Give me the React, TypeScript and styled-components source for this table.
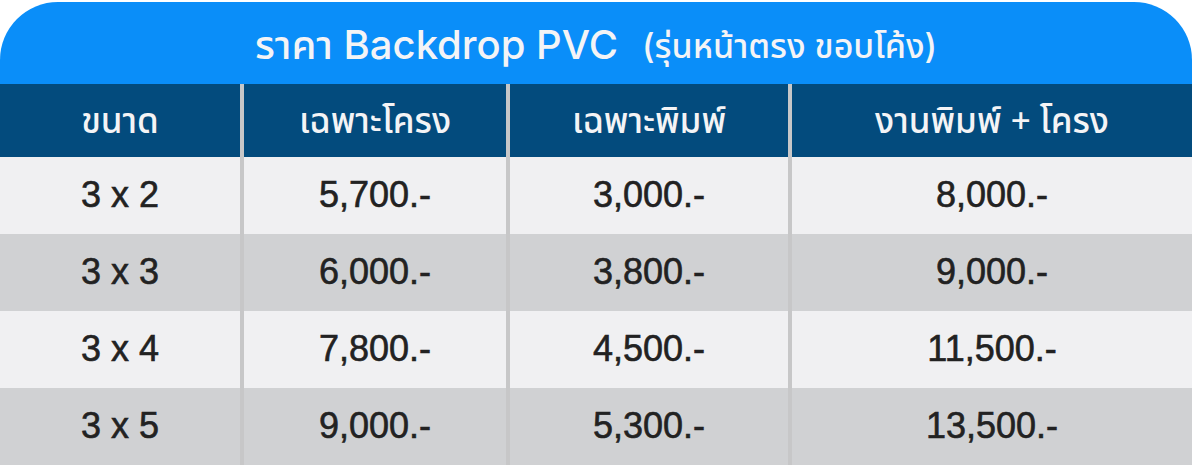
import React from "react";
import styled, { createGlobalStyle } from "styled-components";

const GlobalStyle = createGlobalStyle`
  html, body {
    margin: 0;
    padding: 0;
    background: #ffffff;
  }
`;

const titleFont = `Inter, "Noto Sans", "Noto Sans Thai", sans-serif`;
const thaiFont = `"Noto Sans", "Noto Sans Thai", "Liberation Sans", sans-serif`;
const numberFont = `"Liberation Sans", Arial, sans-serif`;

const Card = styled.div`
  width: 1192px;
  height: 465px;
  display: flex;
  flex-direction: column;
  overflow: hidden;
`;

const TitleBar = styled.div`
  height: 82px;
  margin-top: 2px;
  background: #0a8ef9;
  border-radius: 58px 58px 0 0;
  display: flex;
  align-items: center;
  justify-content: center;
  gap: 24px;
  color: #f4f4f6;
  font-family: ${titleFont};
  font-size: 40px;
  font-weight: 500;
  padding-top: 8px;
  box-sizing: border-box;
`;

const SubTitle = styled.span`
  font-size: 34px;
`;

const Row = styled.div<{ $height: number }>`
  display: grid;
  grid-template-columns: 240px 262px 278px 1fr;
  column-gap: 4px;
  height: ${(p) => p.$height}px;
  background: #c7c7c8;
`;

const HeadCell = styled.div`
  background: #034b7d;
  color: #f4f4f6;
  font-family: ${thaiFont};
  font-size: 35px;
  font-weight: 500;
  display: flex;
  align-items: center;
  justify-content: center;
  padding-top: 4px;
`;

const Cell = styled.div<{ $shade: boolean }>`
  background: ${(p) => (p.$shade ? "#d0d1d3" : "#f0f0f2")};
  color: #222222;
  font-family: ${numberFont};
  font-size: 36px;
  -webkit-text-stroke: 0.6px #222222;
  display: flex;
  align-items: center;
  justify-content: center;
  padding-bottom: 2px;
`;

const headers = ["ขนาด", "เฉพาะโครง", "เฉพาะพิมพ์", "งานพิมพ์ + โครง"];

const rows = [
  ["3 x 2", "5,700.-", "3,000.-", "8,000.-"],
  ["3 x 3", "6,000.-", "3,800.-", "9,000.-"],
  ["3 x 4", "7,800.-", "4,500.-", "11,500.-"],
  ["3 x 5", "9,000.-", "5,300.-", "13,500.-"],
];

export default function App() {
  return (
    <>
      <GlobalStyle />
      <Card>
        <TitleBar>
          <span>ราคา Backdrop PVC</span>
          <SubTitle>(รุ่นหน้าตรง ขอบโค้ง)</SubTitle>
        </TitleBar>
        <Row $height={73}>
          {headers.map((h) => (
            <HeadCell key={h}>{h}</HeadCell>
          ))}
        </Row>
        {rows.map((r, i) => (
          <Row key={r[0]} $height={77}>
            {r.map((v, j) => (
              <Cell key={j} $shade={i % 2 === 1}>
                {v}
              </Cell>
            ))}
          </Row>
        ))}
      </Card>
    </>
  );
}
